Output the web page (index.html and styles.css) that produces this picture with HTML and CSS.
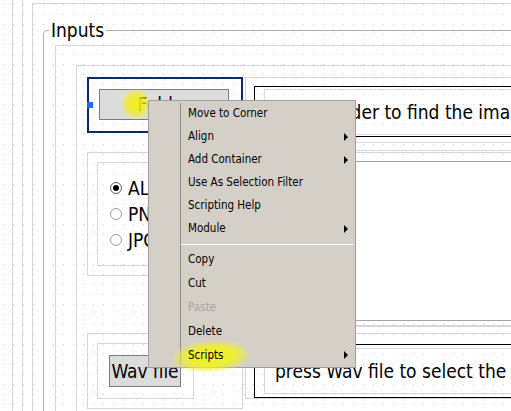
FILE: index.html
```html
<!DOCTYPE html>
<html lang="en">
<head>
    <meta charset="UTF-8">
    <meta name="viewport" content="width=device-width, initial-scale=1.0">
    <title>Inputs</title>
    <link rel="stylesheet" href="styles.css">
</head>
<body>
    <div class="frame f1">
        <div class="frame f2">
            <div class="frame f3">
                <fieldset class="group">
                    <legend>Inputs</legend>
                    <div class="frame f5">
                        <div class="frame f6">
                            <div class="layout">
                                <!-- row 1 -->
                                <div class="sel">
                                    <span class="handle"></span>
                                    <button class="btn folder">Folder</button>
                                    <span class="glow glow-a"></span>
                                </div>
                                <div class="frame cellR r1">
                                    <div class="textbox tb1"><div class="textin">press Folder to find the images</div></div>
                                </div>
                                <!-- row 2 -->
                                <div class="frame cellL r2">
                                    <div class="frame radios">
                                        <label class="radio"><span class="ring on"></span>ALL</label>
                                        <label class="radio"><span class="ring"></span>PNG</label>
                                        <label class="radio"><span class="ring"></span>JPG</label>
                                    </div>
                                </div>
                                <div class="frame cellR r2b">
                                    <div class="frame inner">
                                        <div class="panel"></div>
                                    </div>
                                </div>
                                <!-- row 3 -->
                                <div class="frame cellL r3">
                                    <div class="frame wavin">
                                        <button class="btn wav">Wav file</button>
                                    </div>
                                </div>
                                <div class="frame cellR r3b">
                                    <div class="textbox tb3"><div class="textin">press Wav file to select the sound file</div></div>
                                </div>
                            </div>
                        </div>
                    </div>
                </fieldset>
            </div>
        </div>
    </div>

    <div class="menu">
        <span class="glow glow-b"></span>
        <div class="item">Move to Corner</div>
        <div class="item sub">Align</div>
        <div class="item sub">Add Container</div>
        <div class="item">Use As Selection Filter</div>
        <div class="item">Scripting Help</div>
        <div class="item sub">Module</div>
        <div class="sep"></div>
        <div class="item low">Copy</div>
        <div class="item low">Cut</div>
        <div class="item low off">Paste</div>
        <div class="item low">Delete</div>
        <div class="item low sub">Scripts</div>
    </div>
</body>
</html>
```

FILE: styles.css
```css
*{
    margin: 0;
    padding: 0;
    box-sizing: border-box;
}
html,body{
    overflow: hidden;
    height: 100%;
}
body{
    font-family: "DejaVu Sans Condensed", "DejaVu Sans", sans-serif;
    font-size: 19px;
    color: #000;
    background-color: #fff;
    /* designer grid dots, 10px apart */
    background-image:
        linear-gradient(to bottom, transparent 1px, #fff 1px),
        linear-gradient(to right, #cfcfcf 1px, transparent 1px);
    background-size: 10px 10px;
    background-position: 3px 4px;
    position: relative;
}

.frame{
    border: 1px solid #d6d6d6;
}
.f1{
    width: 1200px;
    margin: -20px 0 0 12px;
    padding: 18px 0 0 9px;
}
.f2{
    padding: 3px 0 0 9px;
}
.f3{
    padding: 15px 0 0 10px;
}
.group{
    border: 1px solid #adadad;
    border-radius: 4px 0 0 0;
    min-width: 0;
}
.group legend{
    margin-left: 5px;
    padding: 0 2px;
    line-height: 22px;
}
.f5{
    margin: 4px 0 0 11px;
    padding: 19px 0 0 20px;
}
.f6{
    padding: 11px 0 60px 10px;
}

.layout{
    display: grid;
    grid-template-columns: 156px 1fr;
    grid-template-rows: 73px 176px auto;
    column-gap: 2px;
    align-items: start;
}

/* selected widget */
.sel{
    position: relative;
    border: 2px solid #0c2a6b;
    padding: 10px 12px 11px 10px;
}
.handle{
    position: absolute;
    left: -2px;
    top: 23px;
    width: 6px;
    height: 6px;
    background: #1f6bff;
}
.btn{
    display: block;
    font: inherit;
    color: #000;
    background: #dcdcdc;
    border: 1px solid #7c7c7c;
    text-align: center;
    white-space: nowrap;
    overflow: hidden;
}
.folder{
    width: 130px;
    height: 31px;
    line-height: 29px;
}
.wav{
    width: 72px;
    height: 32px;
    line-height: 31px;
    letter-spacing: -0.1px;
}

.glow{
    position: absolute;
    pointer-events: none;
}
.glow-a{
    left: 31px;
    top: 9px;
    width: 32px;
    height: 32px;
    border-radius: 50%;
    background: radial-gradient(closest-side, rgba(244,240,20,.9) 35%, rgba(244,240,20,.55) 70%, rgba(244,240,20,0) 100%);
}
.glow-b{
    left: 22px;
    top: 239px;
    width: 80px;
    height: 33px;
    transform: rotate(-4deg);
    background: radial-gradient(closest-side, rgba(242,240,40,.95) 55%, rgba(242,240,40,.5) 80%, rgba(242,240,40,0) 100%);
}

/* right hand cells */
.r1{
    padding: 8px 0 5px 8px;
}
.textbox{
    border: 1px solid #000;
}
.tb1{
    padding: 2px 0 1px 9px;
}
.tb3{
    padding: 3px 0 3px 9px;
}
.textin{
    border: 1px solid #dadada;
    height: 46px;
    line-height: 44px;
    padding-left: 10px;
    white-space: nowrap;
}

.r2b{
    padding: 1px 0 0 1px;
}
.inner{
    padding: 8px 0 4px 8px;
}
.panel{
    height: 160px;
    background: #fff;
    border: 1px solid #a3a3a3;
}

.r2{
    margin-top: 2px;
    padding: 9px;
}
.radios{
    padding: 12px 0 12px 12px;
}
.radio{
    display: flex;
    align-items: center;
    gap: 6px;
    height: 26px;
    white-space: nowrap;
}
.ring{
    position: relative;
    width: 12px;
    height: 12px;
    border: 1px solid #9c9c9c;
    border-radius: 50%;
    background: #fff;
}
.ring.on{
    border-color: #5a5a5a;
}
.ring.on::after{
    content: "";
    position: absolute;
    left: 2px;
    top: 2px;
    width: 6px;
    height: 6px;
    border-radius: 50%;
    background: #000;
}

.r3,.r3b{
    margin-top: 7px;
}
.r3{
    padding: 9px;
}
.wavin{
    width: 97px;
    padding: 11px 0 11px 11px;
}
.r3b{
    padding: 10px 0 0 8px;
}

/* context menu */
.menu{
    position: absolute;
    left: 148px;
    top: 100px;
    width: 208px;
    padding-top: 1px;
    background: #d4d0c8;
    border: 1px solid #a0a0a0;
    font-size: 11.5px;
}
.menu::before{
    content: "";
    position: absolute;
    left: 31px;
    top: 2px;
    bottom: 2px;
    width: 1px;
    background: #8e8e8e;
}
.item{
    position: relative;
    z-index: 1;
    height: 23px;
    line-height: 23px;
    padding-left: 39px;
    white-space: nowrap;
}
.item.low{
    height: 24px;
    line-height: 24px;
}
.item.off{
    color: #a3a3a3;
}
.item.sub::after{
    content: "";
    position: absolute;
    right: 7px;
    top: 50%;
    margin-top: -4px;
    border-left: 4px solid #000;
    border-top: 4px solid transparent;
    border-bottom: 4px solid transparent;
}
.sep{
    height: 1px;
    margin: 4px 2px 2px 32px;
    background: #fff;
}
```
